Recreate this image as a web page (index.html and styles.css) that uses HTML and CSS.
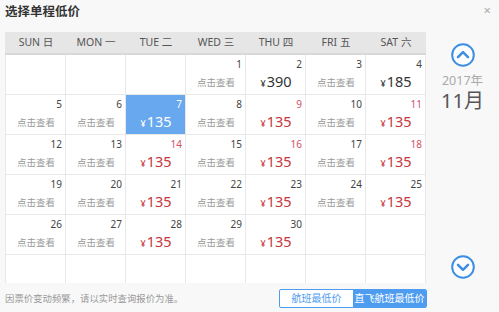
FILE: index.html
```html
<!DOCTYPE html>
<html lang="zh-CN">
<head>
<meta charset="utf-8">
<link rel="stylesheet" href="styles.css">
</head>
<body>
<div class="top">
  <div class="title">选择单程低价</div>
  <div class="close">×</div>
</div>
<div class="main">
  <div class="cal">
    <div class="head">
      <div>SUN 日</div><div>MON 一</div><div>TUE 二</div><div>WED 三</div><div>THU 四</div><div>FRI 五</div><div>SAT 六</div>
    </div>
    <div class="grid">
      <div class="c"></div><div class="c"></div><div class="c"></div>
      <div class="c"><div class="d">1</div><div class="v see">点击查看</div></div>
      <div class="c"><div class="d">2</div><div class="v p dark"><small>¥</small>390</div></div>
      <div class="c"><div class="d">3</div><div class="v see">点击查看</div></div>
      <div class="c"><div class="d">4</div><div class="v p dark"><small>¥</small>185</div></div>

      <div class="c"><div class="d">5</div><div class="v see">点击查看</div></div>
      <div class="c"><div class="d">6</div><div class="v see">点击查看</div></div>
      <div class="c sel"><div class="d">7</div><div class="v p"><small>¥</small>135</div></div>
      <div class="c"><div class="d">8</div><div class="v see">点击查看</div></div>
      <div class="c"><div class="d red">9</div><div class="v p"><small>¥</small>135</div></div>
      <div class="c"><div class="d">10</div><div class="v see">点击查看</div></div>
      <div class="c"><div class="d red">11</div><div class="v p"><small>¥</small>135</div></div>

      <div class="c"><div class="d">12</div><div class="v see">点击查看</div></div>
      <div class="c"><div class="d">13</div><div class="v see">点击查看</div></div>
      <div class="c"><div class="d red">14</div><div class="v p"><small>¥</small>135</div></div>
      <div class="c"><div class="d">15</div><div class="v see">点击查看</div></div>
      <div class="c"><div class="d red">16</div><div class="v p"><small>¥</small>135</div></div>
      <div class="c"><div class="d">17</div><div class="v see">点击查看</div></div>
      <div class="c"><div class="d red">18</div><div class="v p"><small>¥</small>135</div></div>

      <div class="c"><div class="d">19</div><div class="v see">点击查看</div></div>
      <div class="c"><div class="d">20</div><div class="v see">点击查看</div></div>
      <div class="c"><div class="d">21</div><div class="v p"><small>¥</small>135</div></div>
      <div class="c"><div class="d">22</div><div class="v see">点击查看</div></div>
      <div class="c"><div class="d">23</div><div class="v p"><small>¥</small>135</div></div>
      <div class="c"><div class="d">24</div><div class="v see">点击查看</div></div>
      <div class="c"><div class="d">25</div><div class="v p"><small>¥</small>135</div></div>

      <div class="c"><div class="d">26</div><div class="v see">点击查看</div></div>
      <div class="c"><div class="d">27</div><div class="v see">点击查看</div></div>
      <div class="c"><div class="d">28</div><div class="v p"><small>¥</small>135</div></div>
      <div class="c"><div class="d">29</div><div class="v see">点击查看</div></div>
      <div class="c"><div class="d">30</div><div class="v p"><small>¥</small>135</div></div>
      <div class="c"></div><div class="c"></div>

      <div class="c"></div><div class="c"></div><div class="c"></div><div class="c"></div><div class="c"></div><div class="c"></div><div class="c"></div>
    </div>
  </div>
  <div class="side">
    <svg class="arrow" width="24" height="24" viewBox="0 0 24 24"><circle cx="12" cy="12" r="10.8" fill="#fff" stroke="#3d8fe3" stroke-width="2"/><path d="M7 14.2 L12 9.2 L17 14.2" fill="none" stroke="#3d8fe3" stroke-width="2.6" stroke-linecap="round" stroke-linejoin="round"/></svg>
    <div class="year">2017年</div>
    <div class="month">11月</div>
    <svg class="arrow down" width="24" height="24" viewBox="0 0 24 24"><circle cx="12" cy="12" r="10.8" fill="#fff" stroke="#3d8fe3" stroke-width="2"/><path d="M7 9.8 L12 14.8 L17 9.8" fill="none" stroke="#3d8fe3" stroke-width="2.6" stroke-linecap="round" stroke-linejoin="round"/></svg>
  </div>
</div>
<div class="bottom">
  <div class="note">因票价变动频繁，请以实时查询报价为准。</div>
  <div class="toggle">
    <div class="opt">航班最低价</div>
    <div class="opt on">直飞航班最低价</div>
  </div>
</div>
</body>
</html>
```

FILE: styles.css
```css
* { box-sizing: border-box; }
html, body { margin: 0; padding: 0; }
body {
  width: 499px;
  height: 312px;
  overflow: hidden;
  background: #f8f8f8;
  font-family: "Noto Sans", "Noto Sans CJK SC", sans-serif;
  color: #333;
}
.top {
  height: 32px;
  display: flex;
  justify-content: space-between;
  align-items: flex-start;
  padding: 3px 8px 0 5px;
}
.title {
  font-size: 12.5px;
  font-weight: bold;
  line-height: 18px;
  color: #333;
}
.close {
  font-size: 13px;
  line-height: 14px;
  color: #aaa;
}
.main {
  display: flex;
  padding-left: 5px;
}
.cal { width: 421px; }
.head {
  height: 23px;
  background: #e6e6e6;
  border-bottom: 2px solid #d8d8d8;
  display: grid;
  grid-template-columns: repeat(7, 60px);
  padding-left: 1px;
}
.head div {
  font-size: 10.5px;
  line-height: 21px;
  text-align: center;
  color: #555;
}
.grid {
  height: 228px;
  overflow: hidden;
  display: grid;
  grid-template-columns: repeat(7, 60px);
  grid-auto-rows: 40px;
  border-left: 1px solid #e8e8e8;
}
.c {
  background: #fff;
  border-right: 1px solid #e8e8e8;
  border-bottom: 1px solid #e8e8e8;
  padding-top: 3px;
}
.d {
  font-size: 10px;
  line-height: 12px;
  text-align: right;
  padding-right: 3px;
  color: #444;
}
.d.red { color: #d0506a; }
.v {
  height: 22px;
  line-height: 22px;
  text-align: center;
  padding-left: 1px;
}
.see {
  font-size: 9.5px;
  line-height: 25px;
  color: #999;
}
.p {
  font-size: 14.5px;
  color: #c8343c;
}
.p small {
  font-size: 9px;
  margin-right: 1px;
}
.p.dark { color: #333; }
.sel {
  background: #67a8ee;
  border-color: #e8e8e8;
}
.sel .d, .sel .p { color: #fff; }
.side {
  width: 73px;
  height: 251px;
  display: flex;
  flex-direction: column;
  align-items: center;
  padding-top: 11px;
  padding-bottom: 4px;
}
.arrow { display: block; flex: none; }
.arrow.down { margin-top: auto; }
.year {
  margin-top: 7px;
  font-size: 12.5px;
  line-height: 14px;
  color: #aaa;
}
.month {
  margin-top: 2px;
  font-size: 20px;
  line-height: 21px;
  color: #555;
}
.bottom {
  height: 29px;
  display: flex;
  align-items: center;
  justify-content: space-between;
  padding-left: 5px;
  width: 427px;
}
.note {
  font-size: 9.4px;
  color: #999;
}
.toggle {
  display: flex;
  width: 148px;
  height: 19px;
  border: 1px solid #4e9cf0;
  border-radius: 2px;
  overflow: hidden;
  background: #fff;
  margin-top: 1px;
}
.opt {
  flex: 1;
  font-size: 10px;
  line-height: 17px;
  text-align: center;
  color: #4e9cf0;
}
.opt.on {
  background: #4e9cf0;
  color: #fff;
}
```
